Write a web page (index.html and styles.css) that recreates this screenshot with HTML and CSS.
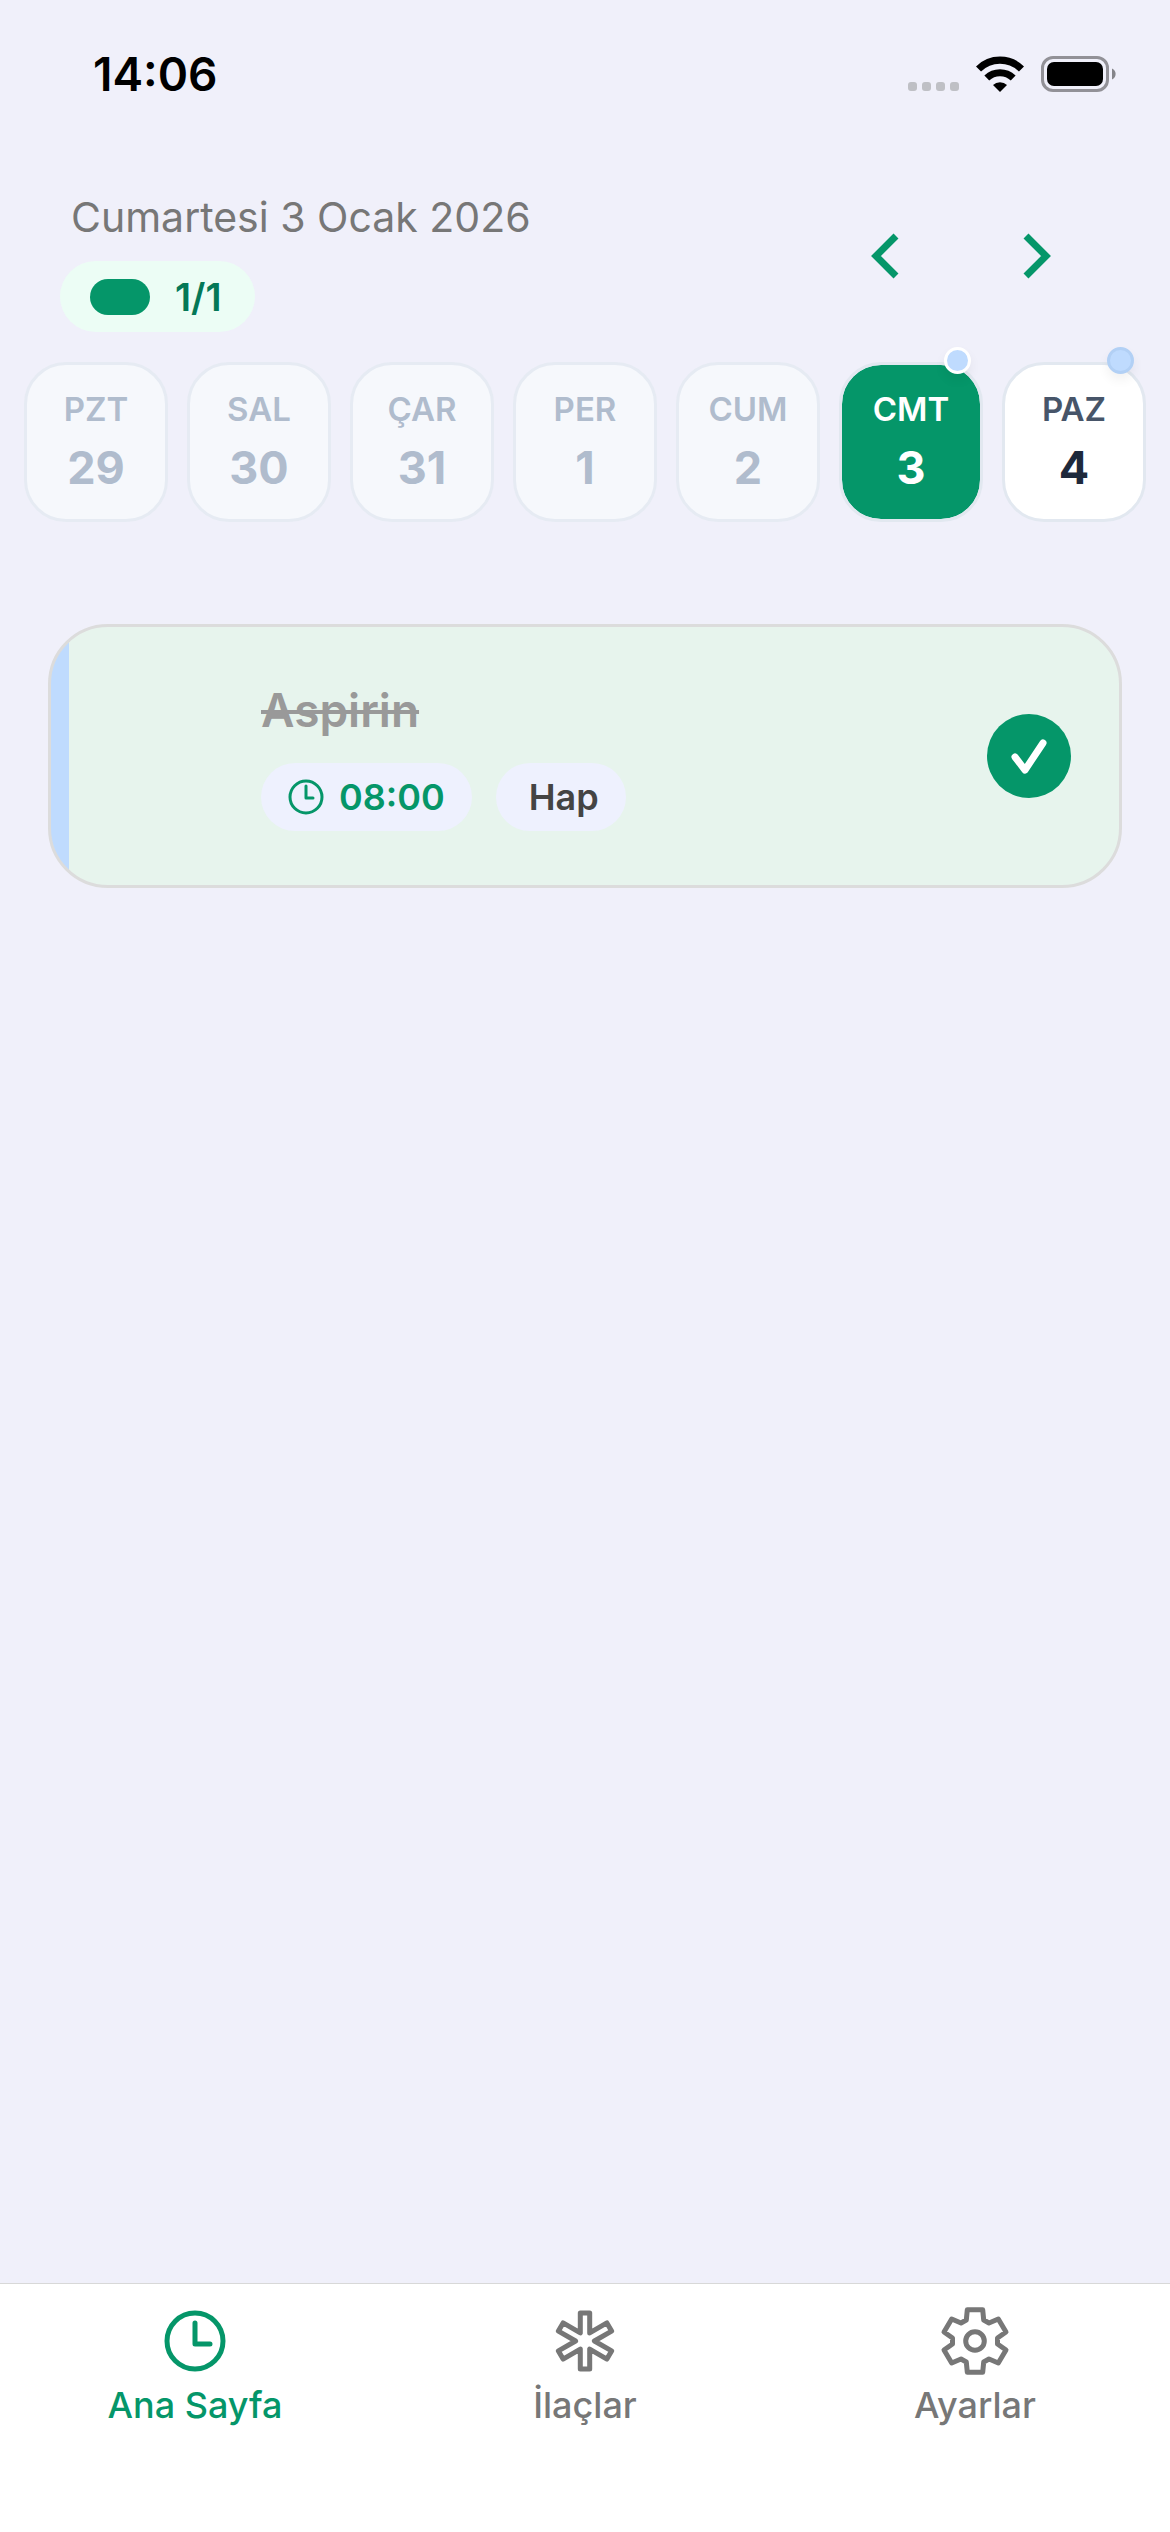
FILE: index.html
```html
<!DOCTYPE html>
<html lang="tr">
<head>
  <meta charset="UTF-8">
  <meta name="viewport" content="width=device-width, initial-scale=1.0">
  <title>Ana Sayfa</title>
  <link rel="stylesheet" href="styles.css">
</head>
<body>
  <div class="status-bar">
    <span class="clock">14:06</span>
    <div class="status-icons">
      <svg class="signal" width="51" height="36" viewBox="0 0 51 36" fill="#bfc0c5">
        <rect x="0" y="26" width="9" height="9" rx="3"/>
        <rect x="14" y="26" width="9" height="9" rx="3"/>
        <rect x="28" y="26" width="9" height="9" rx="3"/>
        <rect x="42" y="26" width="9" height="9" rx="3"/>
      </svg>
      <svg class="wifi" width="48" height="36" viewBox="0 0 48 36">
        <path d="M2.5 13a30.500 30.500 0 0 1 43 0" fill="none" stroke="#000" stroke-width="7.200"/>
        <path d="M10.800 22a19 19 0 0 1 26.400 0" fill="none" stroke="#000" stroke-width="7"/>
        <path d="M24 36l-7-7a10 10 0 0 1 14 0z"/>
      </svg>
      <svg class="battery" width="75" height="36" viewBox="0 0 75 36">
        <rect x="1.500" y="1.500" width="65" height="33" rx="10.500" fill="none" stroke="#929197" stroke-width="3"/>
        <rect x="6" y="6" width="56" height="24" rx="7"/>
        <path d="M71 12.500a6 6 0 0 1 0 11z" fill="#85858a"/>
      </svg>
    </div>
  </div>

  <header>
    <div class="header-info">
      <h1>Cumartesi 3 Ocak 2026</h1>
      <div class="progress-badge">
        <span class="progress-pill"></span>
        <span>1/1</span>
      </div>
    </div>
    <div class="week-arrows">
      <button type="button" aria-label="Önceki hafta">
        <svg width="28" height="46" viewBox="0 0 28 46"><path d="M25 3L5 23l20 20"/></svg>
      </button>
      <button type="button" aria-label="Sonraki hafta">
        <svg width="28" height="46" viewBox="0 0 28 46"><path d="M3 3l20 20L3 43"/></svg>
      </button>
    </div>
  </header>

  <div class="week">
    <button type="button" class="day past"><span class="day-name">PZT</span><span class="day-number">29</span></button>
    <button type="button" class="day past"><span class="day-name">SAL</span><span class="day-number">30</span></button>
    <button type="button" class="day past"><span class="day-name">ÇAR</span><span class="day-number">31</span></button>
    <button type="button" class="day past"><span class="day-name">PER</span><span class="day-number">1</span></button>
    <button type="button" class="day past"><span class="day-name">CUM</span><span class="day-number">2</span></button>
    <button type="button" class="day selected"><span class="day-name">CMT</span><span class="day-number">3</span><span class="dot"></span></button>
    <button type="button" class="day"><span class="day-name">PAZ</span><span class="day-number">4</span><span class="dot"></span></button>
  </div>

  <main>
    <div class="med-card">
      <div class="med-info">
        <h2>Aspirin</h2>
        <div class="chips">
          <span class="chip chip-time">
            <svg width="36" height="36" viewBox="0 0 36 36"><circle cx="18" cy="18" r="16"/><path d="M18 7v12h7"/></svg>
            08:00
          </span>
          <span class="chip chip-type">Hap</span>
        </div>
      </div>
      <label class="check">
        <input type="checkbox" aria-label="Aspirin alındı" checked>
        <svg width="84" height="84" viewBox="0 0 84 84"><path d="M28 43l10 13 18-27"/></svg>
      </label>
    </div>
  </main>

  <nav>
    <a href="#home" class="active">
      <svg width="72" height="72" viewBox="-36 -36 72 72">
        <circle r="28"/>
        <path d="M0-18V3h15"/>
      </svg>
      Ana Sayfa
    </a>
    <a href="#meds">
      <svg width="72" height="72" viewBox="-36 -36 72 72">
        <path d="M-4.700-28H4.700V-8.100L21.900-18.100 26.600-9.900 9.400 0 26.600 9.900 21.900 18.100 4.700 8.100V28H-4.700V8.100L-21.900 18.100-26.600 9.900-9.400 0-26.600-9.900-21.900-18.100-4.700-8.100z"/>
      </svg>
      İlaçlar
    </a>
    <a href="#settings">
      <svg width="72" height="72" viewBox="-36 -36 72 72">
        <circle r="9.300"/>
        <path d="M-7.700-31.300H7.700L8.700-21 14-18 23.300-22 31-9 22.500-3V3L31 9 23.300 22 14 18 8.700 21 7.700 31.300H-7.700L-8.700 21-14 18-23.300 22-31 9-22.500 3V-3L-31-9-23.300-22-14-18-8.700-21z"/>
      </svg>
      Ayarlar
    </a>
  </nav>
</body>
</html>
```

FILE: styles.css
```css
* {
  box-sizing: border-box;
}
body {
  margin: 0;
  min-height: 100vh;
  display: flex;
  flex-direction: column;
  background-color: #f0f0fa;
  font-family: Inter, "Liberation Sans", sans-serif;
}
button {
  font-family: inherit;
  cursor: pointer;
}
svg {
  display: block;
  flex: none;
}

/* Status bar */
.status-bar {
  display: flex;
  justify-content: space-between;
  align-items: center;
  height: 148px;
  padding: 0 54px 0 93px;
}
.clock {
  font-size: 46px;
  font-weight: 600;
}
.status-icons {
  display: flex;
  align-items: center;
}
.wifi {
  margin: 0 17px;
}

/* Date and week arrows */
header {
  display: flex;
  justify-content: space-between;
  align-items: flex-start;
  padding: 44px 107px 0 60px;
}
h1 {
  margin: 0 0 18px;
  padding-left: 11px;
  font-size: 41px;
  font-weight: 400;
  line-height: 51px;
  color: #777;
}
.progress-badge {
  display: inline-flex;
  align-items: center;
  gap: 25px;
  height: 71px;
  padding: 0 33px 0 30px;
  border-radius: 36px;
  background-color: #ecfdf5;
  color: #047857;
  font-size: 38px;
  font-weight: 600;
}
.progress-pill {
  width: 60px;
  height: 36px;
  border-radius: 18px;
  background-color: #059669;
}
.week-arrows {
  display: flex;
  gap: 100px;
  padding-top: 41px;
}
.week-arrows button {
  padding: 0 12px;
  border: none;
  background: none;
}
.week-arrows svg {
  fill: none;
  stroke: #059669;
  stroke-width: 7;
}

/* Week strip */
.week {
  display: grid;
  grid-template-columns: repeat(7, 1fr);
  gap: 19px;
  padding: 30px 24px 0;
}
.day {
  position: relative;
  display: flex;
  flex-direction: column;
  align-items: center;
  justify-content: flex-start;
  gap: 8px;
  height: 160px;
  padding: 20px 0 0;
  border: 3px solid #e2e8f0;
  border-radius: 42px;
  background-color: #fff;
  color: #1e293b;
}
.day-name {
  font-size: 33px;
  font-weight: 600;
  line-height: 48px;
  color: #475569;
}
.day-number {
  font-size: 45px;
  font-weight: 700;
  line-height: 54px;
}
.past {
  border-color: #e6ebf3;
  background-color: #f6f8fc;
}
.past span {
  color: #b0bccd;
}
.selected {
  background-color: #059669;
  background-clip: padding-box;
}
.selected span {
  color: #fff;
}
.dot {
  position: absolute;
  top: -18px;
  right: 9px;
  width: 27px;
  height: 27px;
  border: 3px solid #b2d0f5;
  border-radius: 50%;
  background-color: #bfdbfe;
  box-shadow: 0 6px 12px rgba(0, 0, 0, 0.06);
}
.selected .dot {
  border-color: #fff;
}

/* Medicine card */
main {
  flex: 1;
  padding: 102px 48px 0;
}
.med-card {
  display: flex;
  justify-content: space-between;
  align-items: center;
  height: 264px;
  padding: 0 48px 0 210px;
  border: 3px solid #dcdcdc;
  border-radius: 60px;
  background: linear-gradient(to right, #bfdbfe 18px, #e7f4ed 18px);
}
h2 {
  margin: 0 0 24px;
  font-size: 46px;
  font-weight: 600;
  line-height: 58px;
  color: #999;
  text-decoration: line-through;
}
.chips {
  display: flex;
  gap: 24px;
}
.chip {
  display: flex;
  align-items: center;
  gap: 15px;
  height: 68px;
  padding: 0 27px;
  border-radius: 34px;
  background-color: #eef1fe;
  font-size: 36px;
  font-weight: 600;
}
.chip-time {
  color: #059669;
}
.chip-time svg {
  fill: none;
  stroke: #059669;
  stroke-width: 3;
  stroke-linecap: round;
  stroke-linejoin: round;
}
.chip-type {
  padding-left: 33px;
  color: #444;
}
.check {
  position: relative;
  cursor: pointer;
}
.check input {
  display: block;
  appearance: none;
  width: 84px;
  height: 84px;
  margin: 0;
  border-radius: 50%;
  background-color: #059669;
}
.check svg {
  position: absolute;
  top: 0;
  left: 0;
  fill: none;
  stroke: #fff;
  stroke-width: 7;
  stroke-linecap: round;
  stroke-linejoin: round;
}

/* Tab bar */
nav {
  display: flex;
  height: 249px;
  border-top: 1px solid #d8d8d8;
  background-color: #fff;
}
nav a {
  flex: 1;
  display: flex;
  flex-direction: column;
  align-items: center;
  gap: 6px;
  padding-top: 21px;
  color: #777;
  font-size: 36px;
  font-weight: 500;
  line-height: 44px;
  text-decoration: none;
}
nav a.active {
  color: #059669;
}
nav svg {
  fill: none;
  stroke: currentColor;
  stroke-width: 5;
  stroke-linecap: round;
  stroke-linejoin: round;
}
```
